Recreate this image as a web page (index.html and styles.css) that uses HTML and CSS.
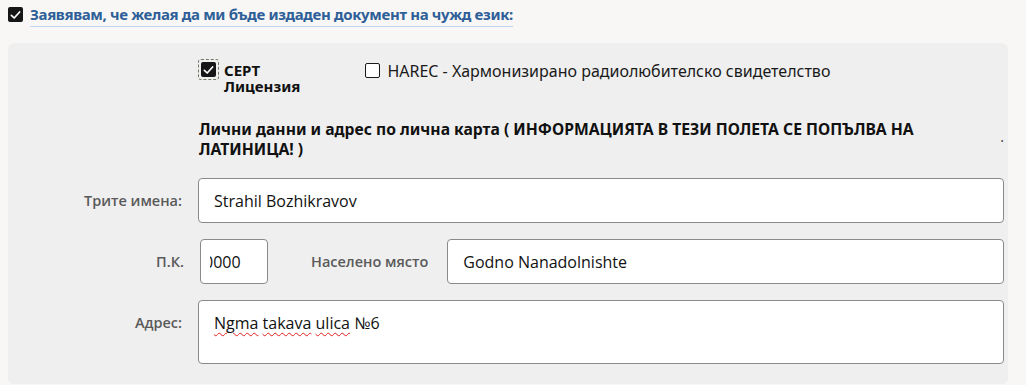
FILE: index.html
```html
<!DOCTYPE html>
<html lang="bg">
<head>
  <meta charset="UTF-8" />
  <title>Документ на чужд език</title>
  <link rel="stylesheet" href="styles.css">
</head>
<body>
  <label class="declare">
    <span class="box box-dark">
      <svg viewBox="0 0 16 16" width="16" height="16"><path d="M3.6 8.4L6.6 11.2L12.4 4.8" stroke="#fff" stroke-width="1.8" fill="none" stroke-linecap="round" stroke-linejoin="round"/></svg>
    </span>
    <span class="declare-text">Заявявам, че желая да ми бъде издаден документ на чужд език:</span>
  </label>

  <div class="panel">
    <div class="doc-types">
      <label class="doc-type doc-cert">
        <span class="focus-ring">
          <span class="box box-dark">
            <svg viewBox="0 0 16 16" width="16" height="16"><path d="M3.6 8.4L6.6 11.2L12.4 4.8" stroke="#fff" stroke-width="1.8" fill="none" stroke-linecap="round" stroke-linejoin="round"/></svg>
          </span>
        </span>
        <span class="doc-name"><span class="doc-line">СЕРТ</span><span class="doc-line">Лицензия</span></span>
      </label>
      <label class="doc-type doc-harec">
        <span class="box box-empty"></span>
        <span class="doc-plain">HAREC - Хармонизирано радиолюбителско свидетелство</span>
      </label>
    </div>

    <div class="heading-row">
      <div class="heading">Лични данни и адрес по лична карта ( ИНФОРМАЦИЯТА В ТЕЗИ ПОЛЕТА СЕ ПОПЪЛВА НА ЛАТИНИЦА! )</div>
      <span class="dot">.</span>
    </div>

    <div class="row">
      <span class="label">Трите имена:</span>
      <div class="field field-wide">Strahil Bozhikravov</div>
    </div>

    <div class="row row-city">
      <span class="label label-pk">П.К.</span>
      <div class="field field-pk"><span class="pk-text">0000</span></div>
      <span class="label label-city">Населено място</span>
      <div class="field field-city">Godno Nanadolnishte</div>
    </div>

    <div class="row row-addr">
      <span class="label">Адрес:</span>
      <div class="field field-area"><span class="area-text"><span class="spell">Ngma</span> <span class="spell">takava</span> <span class="spell">ulica</span> №6</span></div>
    </div>
  </div>
</body>
</html>
```

FILE: styles.css
```css
html, body {
  box-sizing: border-box;
}
body {
  margin: 0;
  background: #f8f7f5;
  font-family: 'Noto Sans', 'Open Sans', sans-serif;
  color: #111;
  width: 1026px;
  height: 385px;
  overflow: hidden;
}
.box {
  display: inline-flex;
  align-items: center;
  justify-content: center;
  width: 15px;
  height: 15px;
  border-radius: 2px;
  box-sizing: border-box;
  flex-shrink: 0;
}
.box-dark {
  background: #161616;
}
.box-empty {
  background: #fff;
  border: 1.5px solid #1b1b1b;
}
/* top declaration */
.declare {
  display: flex;
  align-items: flex-start;
  padding: 7px 0 0 8px;
  height: 36px;
  box-sizing: border-box;
}
.declare-text {
  margin-left: 7px;
  margin-top: -3px;
  font-size: 15px;
  font-weight: 700;
  letter-spacing: -0.35px;
  color: #2f5f98;
  line-height: 21px;
  border-bottom: 1px solid #bcd7f1;
  padding-bottom: 1px;
}
.panel {
  margin: 7px 18px 0 8px;
  background: #efefef;
  border-radius: 6px;
  height: 341px;
  padding: 19px 4px 0 0;
  box-sizing: border-box;
}
.doc-types {
  display: flex;
  align-items: flex-start;
  padding-left: 190px;
}
.doc-type {
  display: flex;
  align-items: flex-start;
}
.focus-ring {
  display: inline-flex;
  padding: 2px;
  border: 1px dashed #6f7a66;
  border-radius: 3px;
  margin-top: -3px;
}
.doc-name {
  display: flex;
  flex-direction: column;
  margin-left: 5px;
  margin-top: 0;
  font-size: 15px;
  font-weight: 700;
}
.doc-line {
  line-height: 16px;
  height: 16px;
}
.doc-harec {
  margin-left: 65px;
  margin-top: 1px;
}
.doc-plain {
  margin-left: 7px;
  font-size: 16px;
  line-height: 16px;
  color: #1a1a1a;
}
.heading-row {
  display: flex;
  align-items: flex-start;
  padding-left: 191px;
  margin-top: 25px;
}
.heading {
  width: 745px;
  font-size: 15.7px;
  font-weight: 700;
  line-height: 20px;
}
.dot {
  margin-left: 59px;
  margin-top: 11px;
  font-size: 14px;
  line-height: 14px;
  color: #444;
}
.row {
  display: flex;
  align-items: center;
  margin-top: 19px;
}
.label {
  width: 174px;
  text-align: right;
  font-family: 'Open Sans', sans-serif;
  font-size: 14.5px;
  font-weight: 600;
  color: #5a5a5a;
  flex-shrink: 0;
}
.field {
  background: #fff;
  border: 1px solid #8a8a8a;
  border-radius: 4px;
  box-sizing: border-box;
  height: 45px;
  display: flex;
  align-items: center;
  padding-left: 15px;
  font-family: 'Open Sans', sans-serif;
  font-size: 16px;
  color: #111;
  overflow: hidden;
  white-space: nowrap;
}
.field-wide {
  margin-left: 16px;
  flex: 1;
}
.row-city {
  margin-top: 16px;
}
.label-pk {
  width: 176px;
}
.field-pk {
  margin-left: 16px;
  width: 68px;
  padding-left: 0;
}
.pk-text {
  margin-left: 9px;
  text-indent: -6px;
  display: inline-block;
  overflow: hidden;
  width: 52px;
}
.label-city {
  width: auto;
  margin-left: 43px;
}
.field-city {
  margin-left: 19px;
  flex: 1;
}
.row-addr {
  align-items: flex-start;
  margin-top: 16px;
}
.row-addr .label {
  margin-top: 13px;
}
.field-area {
  margin-left: 16px;
  flex: 1;
  height: 64px;
  align-items: flex-start;
  padding-top: 11px;
}
.spell {
  text-decoration: underline wavy #e02020;
  text-decoration-thickness: 1px;
  text-underline-offset: 3px;
}
```
